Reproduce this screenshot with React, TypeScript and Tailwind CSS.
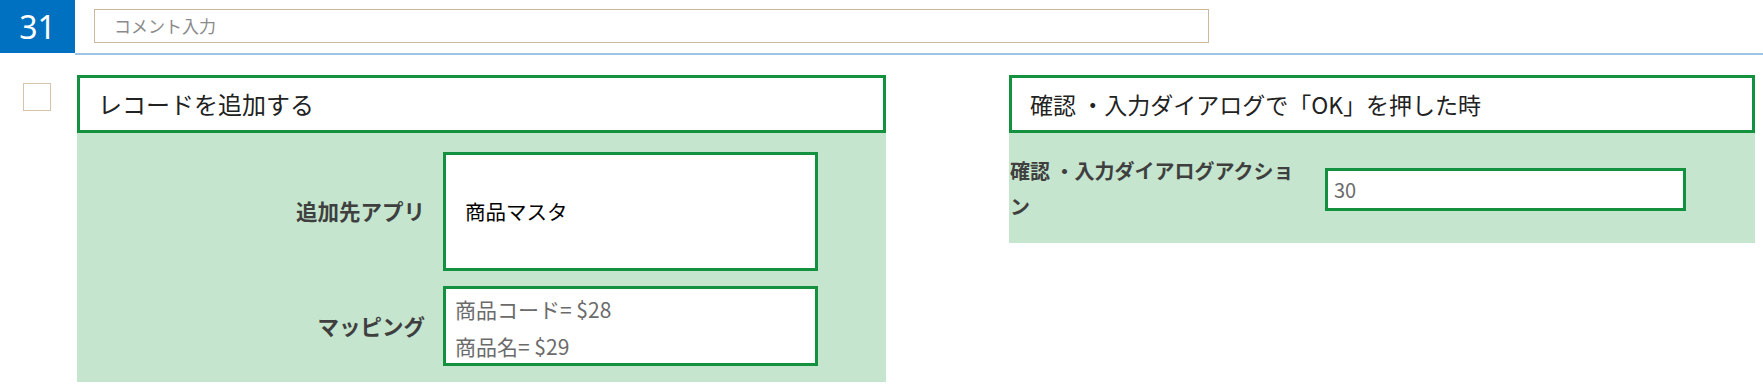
import React from 'react';

const green = 'border-[#13913f]';

function FieldRow({ label, children }: { label: string; children: React.ReactNode }) {
    return (
        <div className="flex items-center">
            <div className="w-[366px] pr-[18px] text-right text-[21.5px] font-bold text-[#3f3f3f]">{label}</div>
            {children}
        </div>
    );
}

export default function App() {
    return (
        <div className="w-[1763px] h-[385px] bg-white font-['Noto_Sans_CJK_JP',sans-serif] overflow-hidden">
            {/* top bar */}
            <div className="flex items-start h-[55px]">
                <div className="w-[75px] h-[53px] bg-[#0070c0] text-white text-[32px] font-['Noto_Sans',sans-serif] flex items-center justify-center">
                    31
                </div>
                <div className="flex-1 h-[55px] border-b-2 border-[#9dc3e6] pt-[9px] pl-[19px]">
                    <div className="w-[1115px] h-[34px] border-[1.5px] border-[#cbb89d] flex items-center pl-[19px] text-[17px] text-[#8a8a8a]">
                        コメント入力
                    </div>
                </div>
            </div>

            <div className="flex pt-[20px]">
                <div className="w-[77px] pl-[23px] pt-[8px]">
                    <div className="w-[28px] h-[28px] border-[1.5px] border-[#d5c4ab]" />
                </div>

                {/* left panel */}
                <div className="w-[809px]">
                    <div className={`h-[58px] border-[3px] ${green} flex items-center pl-[18px] text-[24px] text-[#222]`}>
                        レコードを追加する
                    </div>
                    <div className="bg-[#c5e5ce] pt-[19px] pb-[16px] flex flex-col gap-[15px]">
                        <FieldRow label="追加先アプリ">
                            <div className={`w-[375px] h-[119px] bg-white border-[3px] ${green} flex items-center pl-[19px] text-[20.5px] text-black`}>
                                商品マスタ
                            </div>
                        </FieldRow>
                        <FieldRow label="マッピング">
                            <div className={`w-[375px] h-[80px] bg-white border-[3px] ${green} flex flex-col justify-center pt-[3px] pl-[9px] text-[21px] leading-[37px] text-[#6b6b6b]`}>
                                <span>商品コード= $28</span>
                                <span>商品名= $29</span>
                            </div>
                        </FieldRow>
                    </div>
                </div>

                {/* right panel */}
                <div className="w-[746px] ml-[123px]">
                    <div className={`h-[58px] border-[3px] ${green} flex items-center pl-[18px] text-[23px] text-[#222]`}>
                        確認 ・入力ダイアログで「OK」を押した時
                    </div>
                    <div className="bg-[#c5e5ce] h-[110px] flex items-start">
                        <div className="w-[300px] pt-[20px] pl-[1px] text-[20px] leading-[36px] font-bold text-[#3f3f3f]">
                            確認 ・入力ダイアログアクション
                        </div>
                        <div className={`mt-[35px] ml-[16px] w-[361px] h-[43px] bg-white border-[3px] ${green} flex items-center pl-[6px] text-[20px] text-[#6b6b6b]`}>
                            30
                        </div>
                    </div>
                </div>
            </div>
        </div>
    );
}
